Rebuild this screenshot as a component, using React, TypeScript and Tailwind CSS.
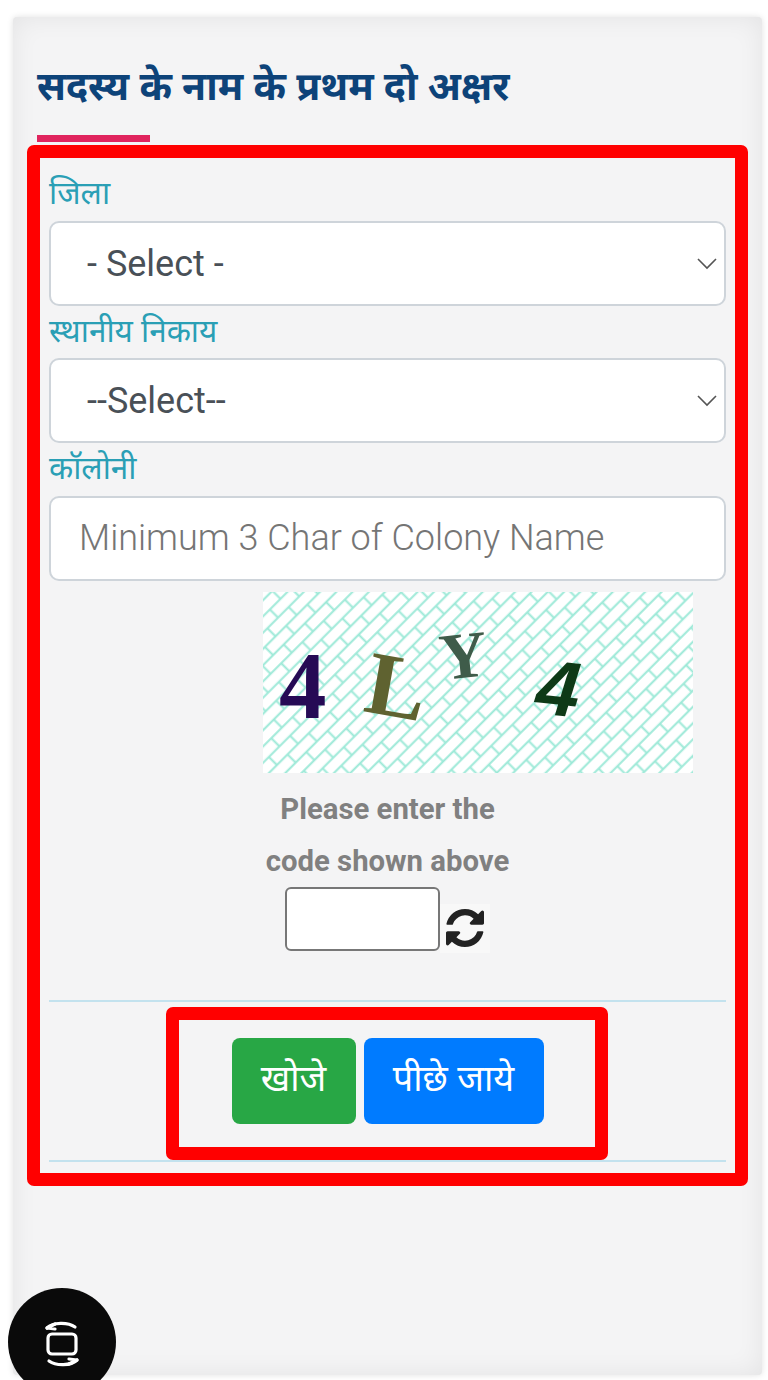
const deva = { fontFamily: '"Noto Sans", "Noto Sans Devanagari", "Lohit Devanagari", "Liberation Sans", sans-serif' };

function Chevron() {
  return (
    <svg className="absolute right-[9px] top-[36px] pointer-events-none" width="20" height="14" viewBox="0 0 20 14" fill="none">
      <path d="M1 2 L10 11 L19 2" stroke="#555" strokeWidth="1.6" />
    </svg>
  );
}

function Label({ children }: { children: string }) {
  return (
    <label style={deva} className="block h-[52.5px] pt-[4px] text-[31.5px] leading-[40px] text-[#2a9fb5]">
      {children}
    </label>
  );
}

function SelectBox({ value }: { value: string }) {
  return (
    <div className="relative">
      <select
        defaultValue={value}
        className="block h-[85px] w-full appearance-none rounded-[10px] border-2 border-[#ced4da] bg-white pl-[36px] pr-10 pt-[1px] font-['Roboto',sans-serif] text-[36px] text-[#495057]"
      >
        <option>{value}</option>
      </select>
      <Chevron />
    </div>
  );
}

function Captcha() {
  return (
    <svg className="ml-[214px] mt-[11px] block" width="430" height="181" viewBox="0 0 430 181">
      <defs>
        <pattern id="brick" width="30" height="23" patternUnits="userSpaceOnUse" patternTransform="rotate(-45)">
          <rect width="30" height="23" fill="#ffffff" />
          <path d="M0 5.75H30M0 17.25H30M7.5 5.75V17.25M22.5 17.25V28.75M22.5 -5.75V5.75" stroke="#9ce9d7" strokeWidth="2" fill="none" />
        </pattern>
      </defs>
      <rect width="430" height="181" fill="url(#brick)" />
      <text x="16" y="126" fontFamily="Liberation Serif" fontWeight="700" fontSize="95" fill="#260a55">4</text>
      <text transform="translate(99 119) rotate(10)" fontFamily="Liberation Serif" fontWeight="700" fontSize="90" fill="#5f6230">L</text>
      <text transform="translate(179 88) rotate(-6)" fontFamily="Liberation Serif" fontWeight="700" fontSize="66" fill="#3f5c4a">Y</text>
      <text transform="translate(271 121) rotate(6)" fontFamily="Liberation Sans" fontWeight="700" fontStyle="italic" fontSize="78" fill="#0e3a17">4</text>
    </svg>
  );
}

function RefreshIcon() {
  return (
    <svg width="38" height="40" viewBox="0 0 1536 1536" fill="#222222">
      <path d="M1511 928q0 5-1 7-64 268-268 434.5t-478 166.5q-146 0-282.5-55t-243.5-157l-129 129q-19 19-45 19t-45-19-19-45v-448q0-26 19-45t45-19h448q26 0 45 19t19 45-19 45l-137 137q71 66 161 102t187 36q134 0 250-65t186-179q11-17 53-117 8-23 30-23h192q13 0 22.5 9.5t9.5 22.5zm25-800v448q0 26-19 45t-45 19h-448q-26 0-45-19t-19-45 19-45l138-138q-148-137-349-137-134 0-250 65t-186 179q-11 17-53 117-8 23-30 23h-199q-13 0-22.5-9.5t-9.5-22.5v-7q65-268 270-434.5t480-166.5q146 0 284 55.5t245 156.5l130-129q19-19 45-19t45 19 19 45z" />
    </svg>
  );
}

export default function App() {
  return (
    <div className="relative h-[1380px] w-[768px] overflow-hidden bg-white">
      <div className="relative ml-[13px] mt-[17px] inline-block h-[1358px] w-[749px] rounded-[4px] bg-[#f4f4f5] align-top shadow-[0_0_6px_rgba(0,0,0,0.12),inset_0_0_26px_rgba(0,0,0,0.07)]">
        <h2 style={deva} className="ml-[24px] pt-[41px] text-[39.2px] font-bold leading-[54px] text-[#0d4379]">
          सदस्य के नाम के प्रथम दो अक्षर
        </h2>
        <div className="ml-[24px] mt-[23px] h-[7px] w-[113px] bg-[#e0245e]" />

        <form className="ml-[36px] w-[677px] pt-[26px]">
          <Label>जिला</Label>
          <SelectBox value="- Select -" />
          <Label>स्थानीय निकाय</Label>
          <SelectBox value="--Select--" />
          <Label>कॉलोनी</Label>
          <input
            placeholder="Minimum 3 Char of Colony Name"
            className="block h-[85px] w-full rounded-[10px] border-2 border-[#ced4da] bg-white px-[28px] font-['Roboto',sans-serif] text-[36px] font-light text-[#495057] placeholder:text-[#757575]"
          />
          <Captcha />
          <p className="mt-[10px] text-center font-['Roboto',sans-serif] text-[29.3px] font-bold leading-[52px] text-[#808080]">
            Please enter the
            <br />
            code shown above
          </p>
          <div className="flex justify-center">
            <input className="h-[64px] w-[155px] rounded-[6px] border-2 border-[#777777] bg-white" />
            <div className="mt-[17px] flex h-[49px] w-[50px] items-center justify-center bg-[#f8f8f8]">
              <RefreshIcon />
            </div>
          </div>
          <hr className="mt-[47px] border-0 border-t-2 border-[#c3e2ee]" />
          <div style={deva} className="mt-[36px] flex justify-center gap-[8px] text-[36px] leading-[50px] text-white">
            <button type="button" className="h-[86px] w-[124px] rounded-[8px] bg-[#28a745] pb-[6px]">खोजे</button>
            <button type="button" className="h-[86px] w-[180px] rounded-[8px] bg-[#007bff] pb-[6px]">पीछे जाये</button>
          </div>
          <hr className="mt-[36px] border-0 border-t-2 border-[#c3e2ee]" />
        </form>
      </div>

      <div className="pointer-events-none absolute left-[27px] top-[145px] h-[1041px] w-[721px] rounded-[7px] border-[13px] border-[#ff0000]" />
      <div className="pointer-events-none absolute left-[166px] top-[1007px] h-[153px] w-[442px] rounded-[7px] border-[13px] border-[#ff0000]" />

      <div className="absolute left-[8px] top-[1288px] flex h-[108px] w-[108px] items-start justify-center rounded-full bg-[#0a0a0a] pt-[31px]">
        <svg width="36" height="50" viewBox="0 0 36 50" fill="none" stroke="#fff" strokeWidth="3.2" strokeLinecap="round" strokeLinejoin="round">
          <rect x="4" y="15" width="28" height="20" rx="4" />
          <path d="M3 9 C9 3 24 3 31 8" />
          <path d="M3 9 L11 5 M3 9 L11 10" />
          <path d="M33 41 C27 47 12 47 5 42" />
          <path d="M33 41 L25 45 M33 41 L25 40" />
        </svg>
      </div>
    </div>
  );
}
